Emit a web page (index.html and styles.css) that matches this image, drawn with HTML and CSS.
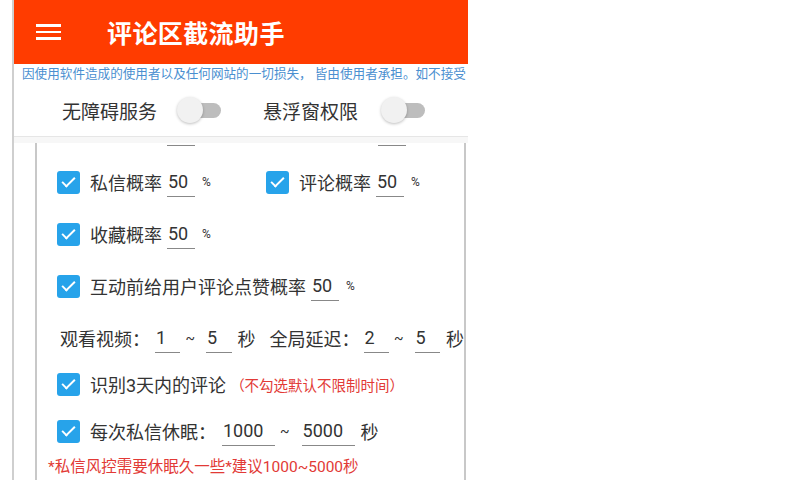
FILE: index.html
```html
<!DOCTYPE html>
<html lang="zh-CN">

<head>
    <meta charset="UTF-8">
    <meta name="viewport" content="width=device-width, initial-scale=1.0">
    <title>评论区截流助手</title>
    <link rel="stylesheet" href="styles.css">
</head>

<body>
    <div class="phone">
        <div class="header">
            <div class="menu">
                <span></span>
                <span></span>
                <span></span>
            </div>
            <div class="title">评论区截流助手</div>
        </div>
        <div class="notice">因使用软件造成的使用者以及任何网站的一切损失， 皆由使用者承担。如不接受</div>
        <div class="switches">
            <span class="sw-label">无障碍服务</span>
            <span class="toggle"><i></i></span>
            <span class="sw-label second">悬浮窗权限</span>
            <span class="toggle last"><i></i></span>
        </div>
        <div class="gap"></div>
        <div class="panel">
            <div class="stub">
                <span class="a"></span>
                <span class="b"></span>
            </div>
            <!-- 概率 -->
            <div class="row">
                <div class="col">
                    <span class="check"></span>
                    <span class="label">私信概率</span>
                    <span class="field">50</span>
                    <span class="unit">%</span>
                </div>
                <div class="col">
                    <span class="check"></span>
                    <span class="label">评论概率</span>
                    <span class="field">50</span>
                    <span class="unit">%</span>
                </div>
            </div>
            <div class="row">
                <div class="col">
                    <span class="check"></span>
                    <span class="label">收藏概率</span>
                    <span class="field">50</span>
                    <span class="unit">%</span>
                </div>
            </div>
            <div class="row">
                <span class="check"></span>
                <span class="label">互动前给用户评论点赞概率</span>
                <span class="field">50</span>
                <span class="unit">%</span>
            </div>
            <!-- 时间 -->
            <div class="row plain">
                <span class="label">观看视频：</span>
                <span class="field">1</span>
                <span class="tilde">~</span>
                <span class="field">5</span>
                <span class="sec">秒</span>
                <span class="label next">全局延迟：</span>
                <span class="field">2</span>
                <span class="tilde">~</span>
                <span class="field">5</span>
                <span class="sec">秒</span>
            </div>
            <div class="row short">
                <span class="check"></span>
                <span class="label">识别3天内的评论</span>
                <span class="hint">（不勾选默认不限制时间）</span>
            </div>
            <div class="row tall">
                <span class="check"></span>
                <span class="label">每次私信休眠：</span>
                <span class="field wide">1000</span>
                <span class="tilde">~</span>
                <span class="field wide">5000</span>
                <span class="sec">秒</span>
            </div>
            <div class="note">*私信风控需要休眠久一些*建议1000~5000秒</div>
        </div>
    </div>
</body>

</html>
```

FILE: styles.css
```css
* {
    margin: 0;
    padding: 0;
    box-sizing: border-box;
}

body {
    background-color: #fff;
    font-family: Roboto, "Noto Sans CJK SC", sans-serif;
    color: #333;
}

.phone {
    width: 456px;
    height: 480px;
    margin-left: 12px;
    border-left: 2px solid #cfcfcf;
    overflow: hidden;
}

.header {
    height: 64px;
    background-color: #ff3c00;
    display: flex;
    align-items: center;
}

.menu {
    width: 25px;
    margin-left: 22px;
    display: flex;
    flex-direction: column;
    gap: 4px;
}

.menu span {
    height: 2.5px;
    background-color: #fff;
}

.title {
    margin-left: 46px;
    color: #fff;
    font-size: 25px;
    font-weight: bold;
    letter-spacing: 0.4px;
}

.notice {
    height: 20px;
    line-height: 20px;
    padding-left: 8px;
    font-size: 12.6px;
    color: #4a8fd0;
    white-space: nowrap;
    overflow: hidden;
}

.switches {
    height: 53px;
    display: flex;
    align-items: center;
    padding-left: 48px;
    border-bottom: 1px solid #e6e6e6;
}

.sw-label {
    font-size: 19px;
}

.sw-label.second {
    margin-left: 40px;
}

.toggle {
    position: relative;
    width: 46px;
    height: 26px;
    margin-left: 20px;
}

.toggle.last {
    margin-left: 23px;
}

.toggle::before {
    content: "";
    position: absolute;
    left: 12px;
    right: 2px;
    top: 6px;
    height: 15px;
    border-radius: 8px;
    background-color: #bdbdbd;
}

.toggle i {
    position: absolute;
    left: 0;
    top: 0;
    width: 26px;
    height: 26px;
    border-radius: 50%;
    background-color: #f1f1f1;
    box-shadow: 0 1px 3px rgba(0, 0, 0, 0.25);
}

.gap {
    height: 6px;
    background-color: #f7f7f7;
}

.panel {
    margin-left: 21px;
    width: 431px;
    height: 400px;
    border-left: 2px solid #c8c8c8;
    border-right: 2px solid #c8c8c8;
}

.stub {
    height: 13px;
    display: flex;
}

.stub span {
    width: 28px;
    height: 3px;
    border-bottom: 1px solid #888;
}

.stub .a {
    margin-left: 130px;
}

.stub .b {
    margin-left: 183px;
}

.row {
    height: 52px;
    display: flex;
    align-items: center;
    padding-left: 20px;
    font-size: 18px;
    white-space: nowrap;
}

.row.plain {
    padding-left: 23px;
}

.row.short {
    height: 40px;
}

.row.tall {
    height: 54px;
}

.col {
    width: 209px;
    flex-shrink: 0;
    display: flex;
    align-items: center;
}

.check {
    width: 23px;
    height: 23px;
    border-radius: 3px;
    margin-right: 10px;
    background-color: #27a3ea;
    position: relative;
    flex-shrink: 0;
}

.check::after {
    content: "";
    position: absolute;
    left: 5px;
    top: 6px;
    width: 11px;
    height: 5px;
    border-left: 2.5px solid #fff;
    border-bottom: 2.5px solid #fff;
    transform: rotate(-45deg);
}

.field {
    display: inline-block;
    width: 28px;
    height: 30px;
    line-height: 30px;
    margin-left: 5px;
    padding-left: 1px;
    border-bottom: 1px solid #888;
}

.field.wide {
    width: 53px;
    margin-left: 6px;
}

.unit {
    font-size: 12px;
    margin-left: 7px;
}

.tilde {
    font-size: 14px;
    margin-left: 5px;
    margin-right: 6px;
}

.sec {
    margin-left: 6px;
}

.label.next {
    margin-left: 14px;
}

.label.next + .field {
    margin-left: 4px;
}

.hint {
    font-size: 14.5px;
    color: #e23a36;
    margin-left: 4px;
}

.note {
    height: 18px;
    line-height: 18px;
    padding-left: 11px;
    font-size: 15.5px;
    color: #e23a36;
    white-space: nowrap;
}
```
